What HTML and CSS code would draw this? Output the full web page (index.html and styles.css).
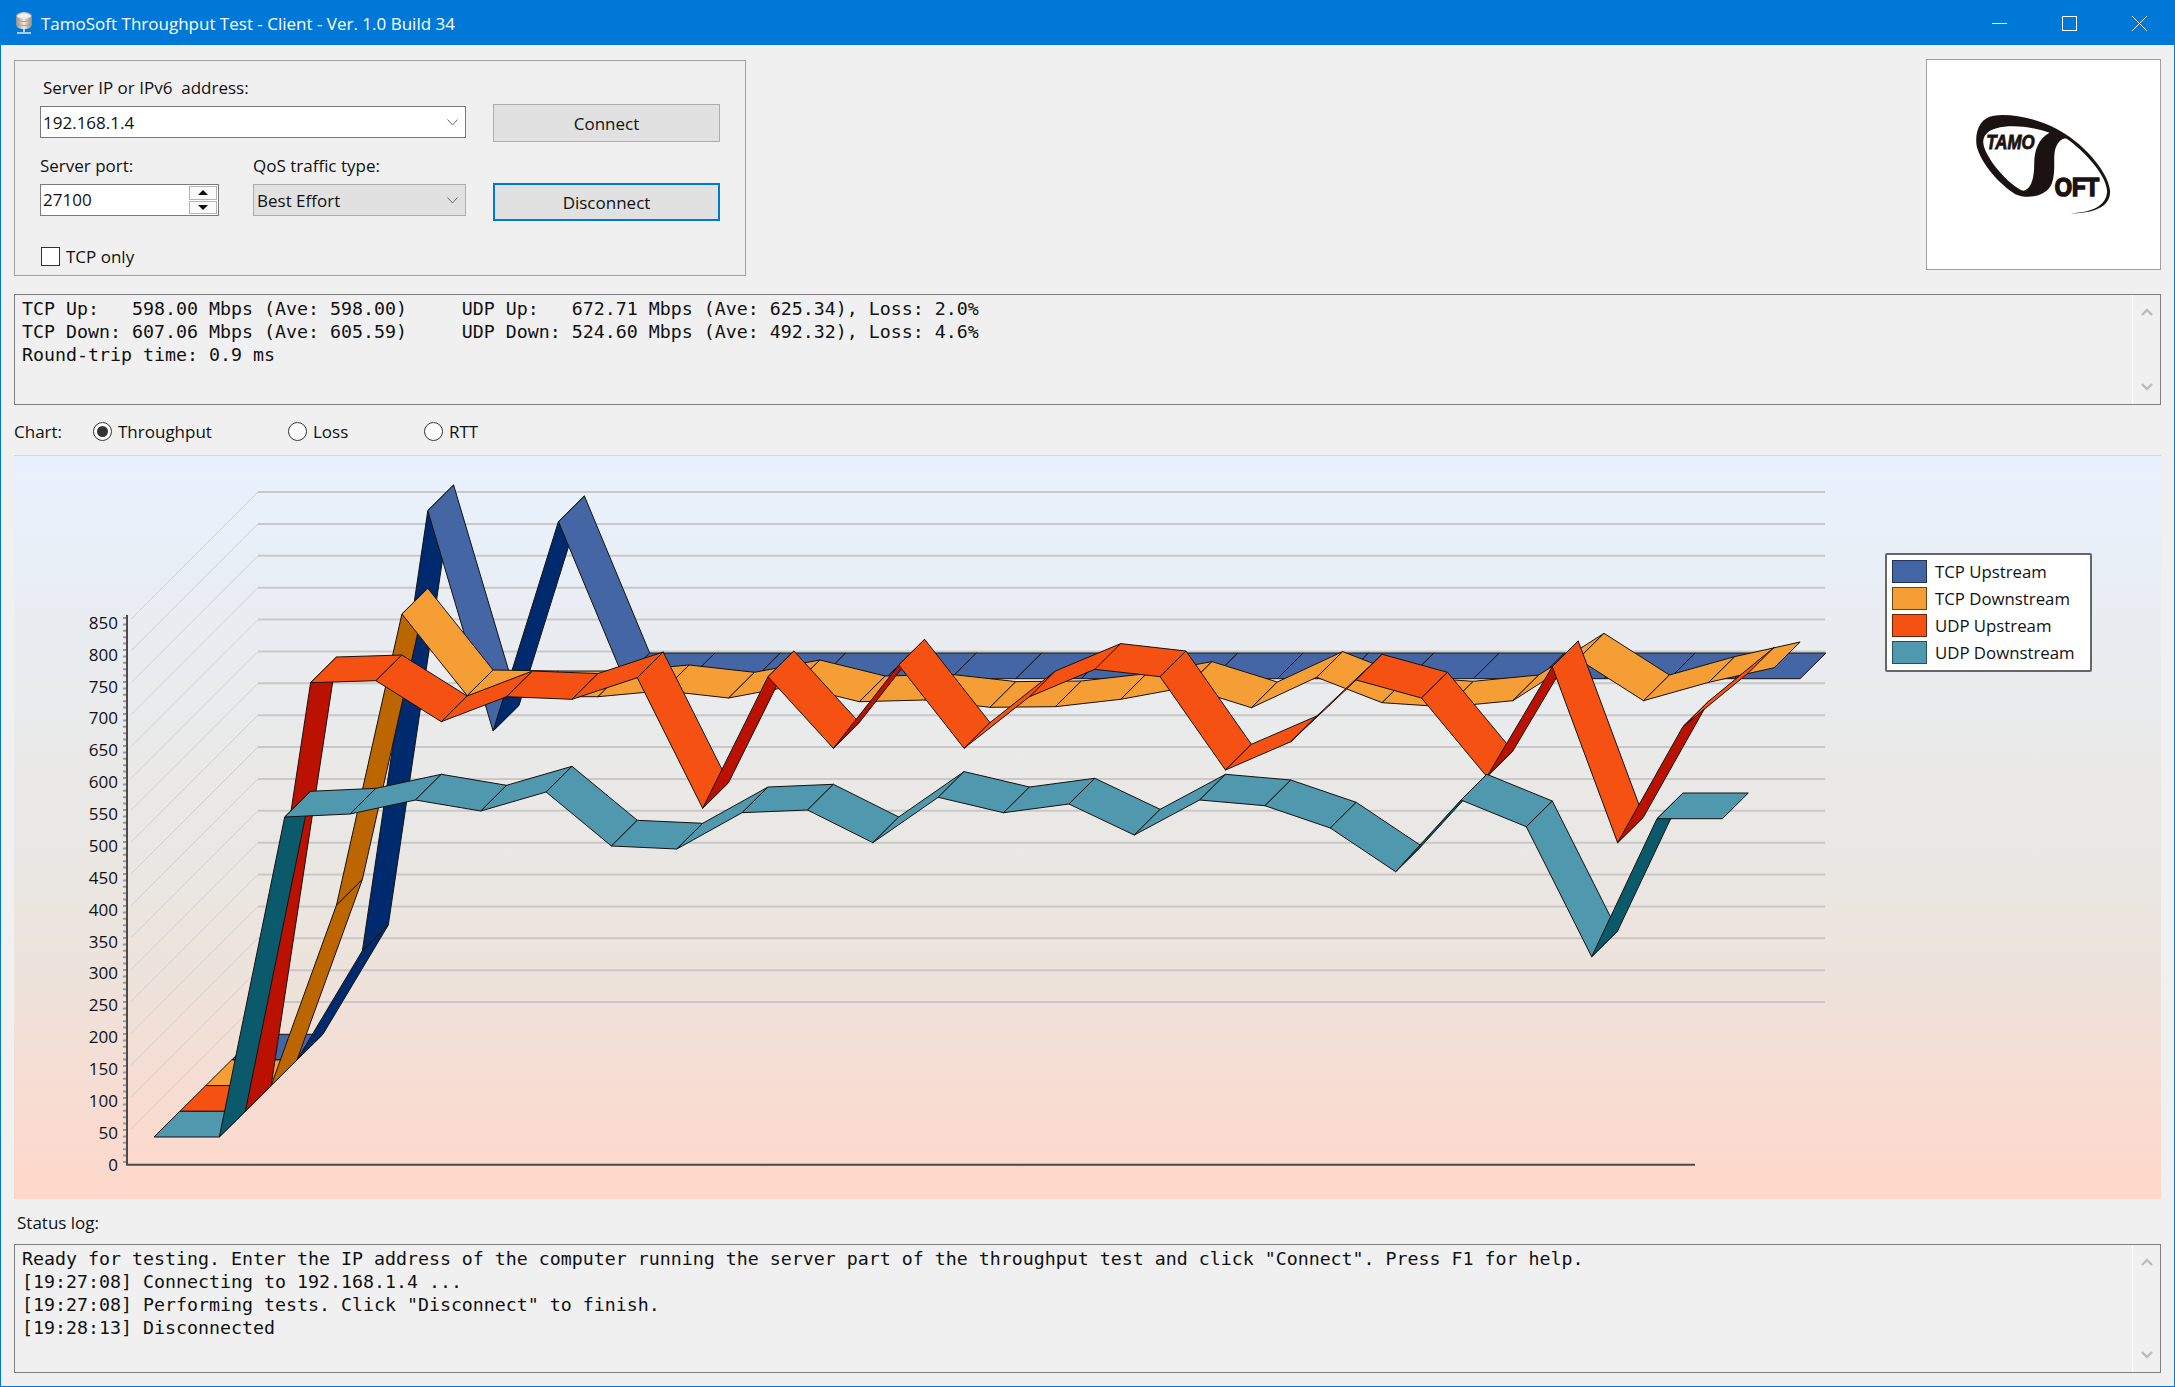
FILE: index.html
```html
<!DOCTYPE html>
<html lang="en">
<head>
<meta charset="utf-8">
<title>TamoSoft Throughput Test - Client - Ver. 1.0 Build 34</title>
<link rel="stylesheet" href="styles.css">
</head>
<body>
<div class="window">
  <header class="titlebar">
    <svg class="app-icon" viewBox="0 0 20 22" aria-hidden="true">
      <defs>
        <linearGradient id="disk" x1="0" x2="1" y1="0" y2="0"><stop offset="0" stop-color="#8f8f8f"/><stop offset=".5" stop-color="#f3e6d8"/><stop offset="1" stop-color="#8a8a8a"/></linearGradient>
      </defs>
      <path d="M2 4c0-5 16-5 16 0v8c0 4-4 5-8 5s-8-1-8-5z" fill="url(#disk)"/>
      <ellipse cx="10" cy="4" rx="7" ry="2.6" fill="#efefef"/>
      <path d="M3 8c3 2 11 2 14 0M3 12c3 2 11 2 14 0" stroke="#b89c86" fill="none"/>
      <path d="M10 16v4M3 21h14" stroke="#e8e8e8" stroke-width="1.6"/>
    </svg>
    <span class="title-text">TamoSoft Throughput Test - Client - Ver. 1.0 Build 34</span>
    <div class="win-buttons">
      <svg class="win-btn" viewBox="0 0 15 15"><path d="M0 7.5h15" stroke="#fff" fill="none"/></svg>
      <svg class="win-btn" viewBox="0 0 15 15"><rect x=".5" y=".5" width="14" height="14" stroke="#fff" fill="none"/></svg>
      <svg class="win-btn" viewBox="0 0 15 15"><path d="M0 0l15 15M15 0L0 15" stroke="#fff" fill="none"/></svg>
    </div>
  </header>

  <main class="content">
    <section class="top-row">
      <div class="group">
        <div class="fields">
          <label class="label label-server">Server IP or IPv6&nbsp; address:</label>
          <div class="combo combo-white">
            <span>192.168.1.4</span>
            <svg class="chev" viewBox="0 0 11 7"><path d="M.5 .5l5 5.5 5-5.5" stroke="#666" fill="none"/></svg>
          </div>
          <div class="pair">
            <label class="label">Server port:</label>
            <label class="label">QoS traffic type:</label>
            <div class="spin">
              <span class="spin-value">27100</span>
              <div class="spin-btns">
                <span class="spin-btn"><i class="tri tri-up"></i></span>
                <span class="spin-btn"><i class="tri tri-down"></i></span>
              </div>
            </div>
            <div class="combo combo-gray">
              <span>Best Effort</span>
              <svg class="chev" viewBox="0 0 11 7"><path d="M.5 .5l5 5.5 5-5.5" stroke="#666" fill="none"/></svg>
            </div>
          </div>
          <div class="check-row"><span class="checkbox"></span><span>TCP only</span></div>
        </div>
        <div class="actions">
          <button class="btn" type="button">Connect</button>
          <button class="btn btn-focus" type="button">Disconnect</button>
        </div>
      </div>
      <div class="logo-box">
        <svg class="logo" viewBox="229 177 702 631" aria-label="TamoSoft logo">
          <path fill="#1a1311" d="M655 639C720 642 783 625 781 572C776 510 690 420 620 385C560 352 480 338 430 345C390 350 372 390 378 435C390 490 450 555 495 582C530 598 590 590 605 550C620 510 605 460 620 435C628 420 640 412 650 415C700 450 768 520 772 572C772 620 720 640 655 639Z"/>
          <path fill="#fff" d="M408 400C430 372 520 368 598 397C565 415 552 450 552 490C552 530 545 565 520 572C480 560 400 470 398 425C398 415 402 405 408 400Z"/>
          <text class="logo-tamo" x="407" y="447" textLength="146" lengthAdjust="spacingAndGlyphs">TAMO</text>
          <text class="logo-oft" x="614" y="588" textLength="134" lengthAdjust="spacingAndGlyphs">OFT</text>
        </svg>
      </div>
    </section>

    <section class="textbox stats">
<pre class="mono">TCP Up:   598.00 Mbps (Ave: 598.00)     UDP Up:   672.71 Mbps (Ave: 625.34), Loss: 2.0%
TCP Down: 607.06 Mbps (Ave: 605.59)     UDP Down: 524.60 Mbps (Ave: 492.32), Loss: 4.6%
Round-trip time: 0.9 ms</pre>
      <div class="scrollbar">
        <svg class="sb-arrow" viewBox="0 0 12 8"><path d="M1 7l5-5 5 5" stroke="#bcbcbc" stroke-width="2.4" fill="none"/></svg>
        <svg class="sb-arrow" viewBox="0 0 12 8"><path d="M1 1l5 5 5-5" stroke="#bcbcbc" stroke-width="2.4" fill="none"/></svg>
      </div>
    </section>

    <section class="chart-row">
      <span class="chart-label">Chart:</span>
      <span class="radio-item item-throughput"><i class="radio radio-on"></i>Throughput</span>
      <span class="radio-item item-loss"><i class="radio"></i>Loss</span>
      <span class="radio-item"><i class="radio"></i>RTT</span>
    </section>

    <section class="chart">
      <svg id="plot" class="plot" viewBox="14 455 2146 744">
        <g id="grid"></g>
        <g id="ribbons"></g>
        <path class="minor" d="M124.5 617V1164"/>
        <path class="axis" d="M127 615V1165.5M126 1164.7H1695"/>
        <g class="ylabels">
          <text x="118" y="629">850</text><text x="118" y="661">800</text><text x="118" y="693">750</text>
          <text x="118" y="724">700</text><text x="118" y="756">650</text><text x="118" y="788">600</text>
          <text x="118" y="820">550</text><text x="118" y="852">500</text><text x="118" y="884">450</text>
          <text x="118" y="916">400</text><text x="118" y="948">350</text><text x="118" y="979">300</text>
          <text x="118" y="1011">250</text><text x="118" y="1043">200</text><text x="118" y="1075">150</text>
          <text x="118" y="1107">100</text><text x="118" y="1139">50</text><text x="118" y="1171">0</text>
        </g>
      </svg>
      <div class="legend">
        <div class="legend-row"><i class="swatch sw-tcpup"></i>TCP Upstream</div>
        <div class="legend-row"><i class="swatch sw-tcpdown"></i>TCP Downstream</div>
        <div class="legend-row"><i class="swatch sw-udpup"></i>UDP Upstream</div>
        <div class="legend-row"><i class="swatch sw-udpdown"></i>UDP Downstream</div>
      </div>
    </section>

    <div class="status-label">Status log:</div>
    <section class="textbox log">
<pre class="mono">Ready for testing. Enter the IP address of the computer running the server part of the throughput test and click "Connect". Press F1 for help.
[19:27:08] Connecting to 192.168.1.4 ...
[19:27:08] Performing tests. Click "Disconnect" to finish.
[19:28:13] Disconnected</pre>
      <div class="scrollbar">
        <svg class="sb-arrow" viewBox="0 0 12 8"><path d="M1 7l5-5 5 5" stroke="#bcbcbc" stroke-width="2.4" fill="none"/></svg>
        <svg class="sb-arrow" viewBox="0 0 12 8"><path d="M1 1l5 5 5-5" stroke="#bcbcbc" stroke-width="2.4" fill="none"/></svg>
      </div>
    </section>
  </main>
</div>
<script src="chart.js"></script>
</body>
</html>
```

FILE: styles.css
```css
* { box-sizing: border-box; }
html, body { margin: 0; padding: 0; }
body {
  width: 2175px;
  height: 1387px;
  overflow: hidden;
  background: #f0f0f0;
  color: #111;
  font-family: "Open Sans", "Noto Sans", sans-serif;
  font-size: 17px;
}
.window {
  width: 2175px;
  height: 1387px;
  border: 1px solid #0078d7;
  display: flex;
  flex-direction: column;
}
.titlebar {
  height: 44px;
  flex: none;
  background: #0078d7;
  color: #fff;
  display: flex;
  align-items: center;
  padding-left: 13px;
  font-size: 17px;
}
.app-icon { width: 20px; height: 22px; margin-right: 7px; }
.title-text { flex: 1; }
.win-buttons { display: flex; align-items: center; gap: 55px; padding-right: 27px; }
.win-btn { width: 15px; height: 15px; display: block; }

.content { flex: 1; display: flex; flex-direction: column; padding: 14px 13px 0; }
.top-row { display: flex; justify-content: space-between; align-items: flex-start; height: 217px; flex: none; }
.group {
  margin-top: 1px;
  width: 732px;
  height: 216px;
  border: 1px solid #a0a0a0;
  padding: 15px 0 0 25px;
  display: flex;
  gap: 27px;
}
.fields { width: 426px; }
.label { display: block; height: 24px; line-height: 24px; white-space: nowrap; }
.label-server { padding-left: 3px; margin-bottom: 6px; }
.combo {
  height: 32px;
  border: 1px solid #7a7a7a;
  display: flex;
  align-items: center;
  justify-content: space-between;
  padding: 0 7px 0 2px;
}
.combo-white { background: #fff; }
.combo-gray { background: #e1e1e1; border-color: #adadad; padding-left: 3px; }
.chev { width: 11px; height: 7px; display: block; }
.pair {
  display: grid;
  grid-template-columns: 179px 213px;
  column-gap: 34px;
  row-gap: 6px;
  margin-top: 16px;
}
.spin {
  height: 32px;
  background: #fff;
  border: 1px solid #7a7a7a;
  display: flex;
  align-items: center;
  justify-content: space-between;
  padding: 1px 1px 1px 2px;
}
.spin-value { padding-bottom: 2px; }
.spin-btns { width: 28px; height: 100%; display: flex; flex-direction: column; gap: 1px; }
.spin-btn {
  flex: 1;
  background: #fafafa;
  border: 1px solid #b4b4b4;
  display: flex;
  align-items: center;
  justify-content: center;
}
.tri { width: 0; height: 0; border-left: 5px solid transparent; border-right: 5px solid transparent; }
.tri-up { border-bottom: 5px solid #111; }
.tri-down { border-top: 5px solid #111; }
.check-row { display: flex; align-items: center; gap: 6px; margin-top: 30px; height: 20px; padding-left: 1px; }
.checkbox { width: 19px; height: 19px; background: #fff; border: 1px solid #333; display: block; }
.actions { width: 227px; padding-top: 28px; display: flex; flex-direction: column; gap: 41px; }
.btn {
  height: 38px;
  background: #e1e1e1;
  border: 1px solid #adadad;
  font: inherit;
  color: #111;
  padding: 0;
}
.btn-focus { border: 2px solid #0078d7; }
.logo-box { width: 235px; height: 211px; background: #fff; border: 1px solid #a0a0a0; }
.logo { width: 100%; height: 100%; display: block; }
.logo-tamo { font: italic 700 60px "Liberation Sans", sans-serif; fill: #1a1311; stroke: #1a1311; stroke-width: 2.5; }
.logo-oft { font: 700 76px "Liberation Sans", sans-serif; fill: #1a1311; stroke: #1a1311; stroke-width: 5; }

.textbox {
  border: 1px solid #7f7f7f;
  background: #f0f0f0;
  display: flex;
  justify-content: space-between;
  flex: none;
  width: 2147px;
}
.stats { margin-top: 18px; height: 111px; }
.log { height: 129px; }
.mono {
  margin: 0;
  padding: 2px 0 0 7px;
  font-family: "DejaVu Sans Mono", "Liberation Mono", monospace;
  font-size: 18.27px;
  line-height: 23px;
  color: #111;
}
.scrollbar {
  width: 28px;
  border-left: 1px solid #fff;
  display: flex;
  flex-direction: column;
  justify-content: space-between;
  align-items: center;
  padding: 13px 0;
}
.sb-arrow { width: 12px; height: 8px; display: block; }

.chart-row { height: 50px; flex: none; display: flex; align-items: center; padding-top: 2px; }
.chart-label { width: 79px; }
.radio-item { display: flex; align-items: center; gap: 6px; }
.item-throughput { width: 195px; }
.item-loss { width: 136px; }
.radio {
  width: 19px;
  height: 19px;
  border-radius: 50%;
  border: 1px solid #333;
  background: #fff;
  display: flex;
  align-items: center;
  justify-content: center;
}
.radio-on::after { content: ""; width: 11px; height: 11px; border-radius: 50%; background: #333; }

.chart {
  position: relative;
  flex: none;
  width: 2147px;
  height: 744px;
  background: linear-gradient(#e8f2fe 0, #e9edf2 22%, #e9e9e8 42%, #eae6e1 58%, #eee2da 72%, #f8dcd1 88%, #ffd8cb 100%);
  border-top: 1px solid #d6d6d6;
}
.plot { display: block; width: 2146px; height: 744px; position: absolute; left: 0; top: -1px; }
.axis { stroke: #4a4a4a; stroke-width: 2; fill: none; }
.minor { stroke: #9a9a9a; stroke-width: 3; stroke-dasharray: 2 4.4; fill: none; }
.ylabels text { font-size: 17px; text-anchor: end; fill: #111; }
.grid-h { stroke: #c8c8c8; stroke-width: 2; }
.grid-d { stroke: #cfcfcf; stroke-width: 1; }
.quad { stroke: #15110e; stroke-width: 1; stroke-linejoin: round; }

.legend {
  position: absolute;
  left: 1871px;
  top: 97px;
  width: 207px;
  height: 119px;
  background: #fff;
  border: 2px solid #666;
  border-radius: 2px;
  padding: 5px 0 0 5px;
  display: flex;
  flex-direction: column;
  gap: 4px;
  font-size: 16.8px;
}
.legend-row { height: 23px; display: flex; align-items: center; gap: 8px; white-space: nowrap; }
.swatch { width: 35px; height: 23px; display: block; border: 1px solid #333; }
.sw-tcpup { background: #4466a4; border-color: #22345a; }
.sw-tcpdown { background: #f59e36; border-color: #6a4415; }
.sw-udpup { background: #f55113; border-color: #6a2408; }
.sw-udpdown { background: #4f98ad; border-color: #26505c; }

.status-label { height: 45px; flex: none; padding: 12px 0 0 3px; line-height: 24px; }
```

FILE: chart.js
```js
// 3D ribbon chart: each series is a ribbon of quads between a front edge and a
// back edge shifted by the depth vector. Quads that flip face show the dark side.
// Quads are painted left to right, so later quads cover earlier ones.
(function () {
  var NS = 'http://www.w3.org/2000/svg';
  var STEP = 65.35, DX = 25.9, DY = -25.7;
  var series = [
    { light: '#4466a4', dark: '#002a6e', x0: 231.7, y: [1060,1060,950.7,510.7,731,521.7,678.7,678.7,678.7,678.7,678.7,678.7,678.7,678.7,678.7,678.7,678.7,678.7,678.7,678.7,678.7,678.7,678.7,678.7,678.7] },
    { light: '#f59e36', dark: '#bb6600', x0: 205.8, y: [1085.6,1085.6,905,614,695.7,696.7,696.7,690.7,698,685.7,701.7,700,707.3,706.7,699.3,687.3,707.7,677.3,702.7,707,700.7,659,700.7,682.3,667.7] },
    { light: '#f55113', dark: '#bb1100', x0: 179.9, y: [1111.3,1111.3,682.7,680.7,721.7,696.7,699.3,677.7,808.3,676.7,748.3,665,748.3,696.7,669.3,676.7,770,741.7,680,698,776.7,666.7,842.7,726.7,673] },
    { light: '#4f98ad', dark: '#0b5a6c', x0: 154, y: [1137,1137,817,814,800,811,792,846,849,812.7,810,842.7,797.3,812.7,804,835,800,805.7,828,871.7,800,826.7,956.7,818.7,818.7] }
  ];

  function el(name, attrs, parent) {
    var n = document.createElementNS(NS, name);
    for (var k in attrs) n.setAttribute(k, attrs[k]);
    parent.appendChild(n);
    return n;
  }

  var grid = document.getElementById('grid');
  for (var g = 0; g < 17; g++) {
    var y = 492 + g * 31.875;
    el('line', { 'class': 'grid-d', x1: 258, y1: y, x2: 131, y2: y + 127 }, grid);
    el('line', { 'class': 'grid-h', x1: 258, y1: y, x2: 1825, y2: y }, grid);
  }

  var ribbons = document.getElementById('ribbons');
  series.forEach(function (s) {
    for (var i = 0; i < s.y.length - 1; i++) {
      var x1 = s.x0 + i * STEP, x2 = x1 + STEP, y1 = s.y[i], y2 = s.y[i + 1];
      var pts = [x1, y1, x2, y2, x2 + DX, y2 + DY, x1 + DX, y1 + DY].map(function (v) { return v.toFixed(1); });
      var str = pts[0] + ',' + pts[1] + ' ' + pts[2] + ',' + pts[3] + ' ' + pts[4] + ',' + pts[5] + ' ' + pts[6] + ',' + pts[7];
      var face = (x2 - x1) * DY - (y2 - y1) * DX;
      el('polygon', { 'class': 'quad', points: str, fill: face > 0 ? s.dark : s.light }, ribbons);
    }
  });
})();
```
